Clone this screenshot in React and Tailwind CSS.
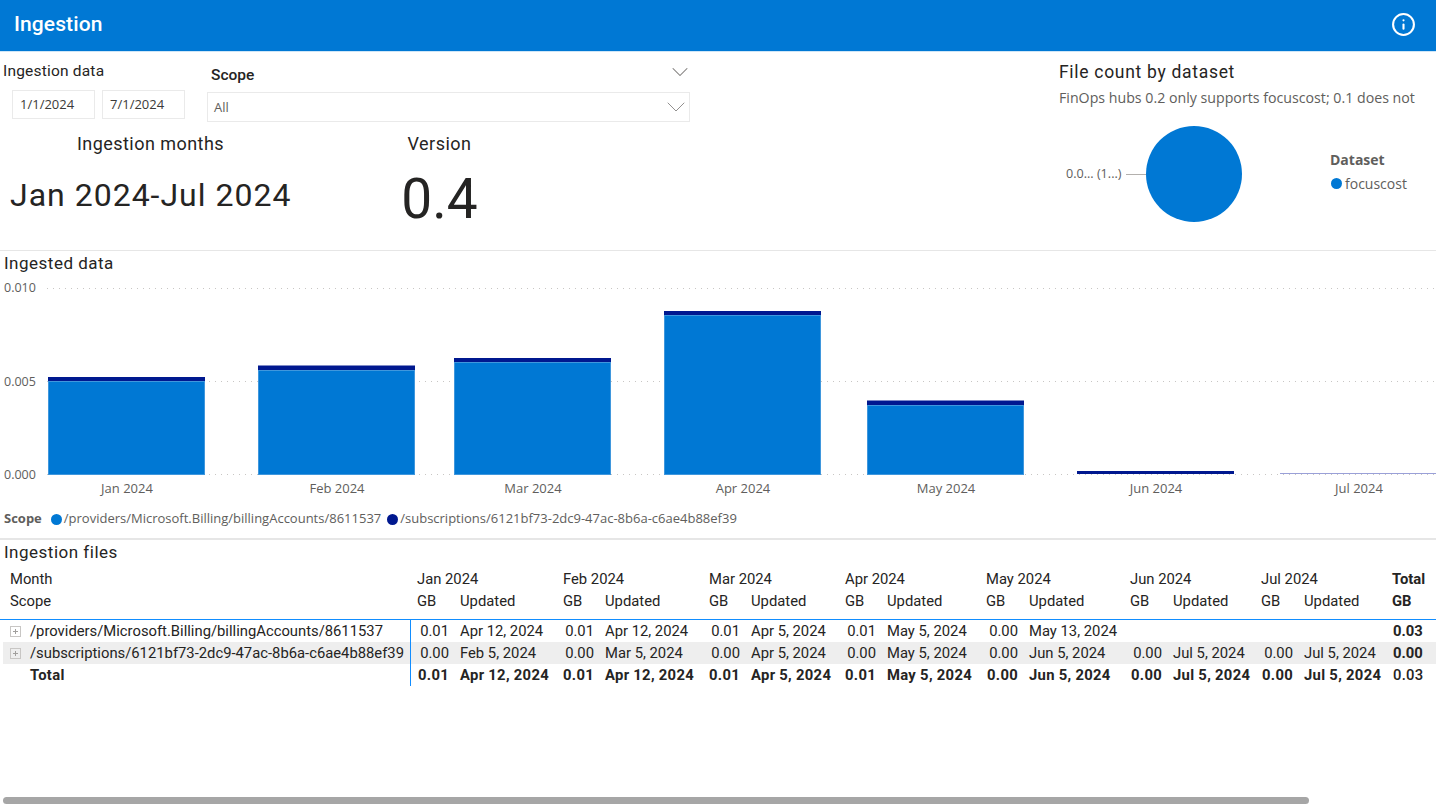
import React from 'react';
import { Info, ChevronDown } from 'lucide-react';

const din = 'font-["Roboto",sans-serif]';
const seg = 'font-["Open_Sans",sans-serif]';

const bars = [
  { label: 'Jan 2024', x: 48, blue: 381, navy: 377 },
  { label: 'Feb 2024', x: 258, blue: 370, navy: 365.5 },
  { label: 'Mar 2024', x: 454, blue: 362, navy: 358 },
  { label: 'Apr 2024', x: 664, blue: 315, navy: 311 },
  { label: 'May 2024', x: 867, blue: 405, navy: 400.5 },
  { label: 'Jun 2024', x: 1077, blue: 474, navy: 471 },
  { label: 'Jul 2024', x: 1280, blue: 474, navy: 473 },
];

const months = ['Jan 2024', 'Feb 2024', 'Mar 2024', 'Apr 2024', 'May 2024', 'Jun 2024', 'Jul 2024'];

const rows = [
  {
    name: '/providers/Microsoft.Billing/billingAccounts/8611537',
    cells: [['0.01', 'Apr 12, 2024'], ['0.01', 'Apr 12, 2024'], ['0.01', 'Apr 5, 2024'], ['0.01', 'May 5, 2024'], ['0.00', 'May 13, 2024'], ['', ''], ['', '']],
    total: '0.03',
  },
  {
    name: '/subscriptions/6121bf73-2dc9-47ac-8b6a-c6ae4b88ef39',
    cells: [['0.00', 'Feb 5, 2024'], ['0.00', 'Mar 5, 2024'], ['0.00', 'Apr 5, 2024'], ['0.00', 'May 5, 2024'], ['0.00', 'Jun 5, 2024'], ['0.00', 'Jul 5, 2024'], ['0.00', 'Jul 5, 2024']],
    total: '0.00',
  },
];

const totals = [['0.01', 'Apr 12, 2024'], ['0.01', 'Apr 12, 2024'], ['0.01', 'Apr 5, 2024'], ['0.01', 'May 5, 2024'], ['0.00', 'Jun 5, 2024'], ['0.00', 'Jul 5, 2024'], ['0.00', 'Jul 5, 2024']];

const tableCols = 'grid grid-cols-[408px_44px_102px_43px_103px_43px_93px_43px_98px_44px_100px_44px_87px_44px_87px_50px]';

const ExpandIcon = () => (
  <svg width="11" height="11" viewBox="0 0 11 11" className="shrink-0">
    <rect x="0.5" y="0.5" width="10" height="10" fill="none" stroke="#c8c6c4" />
    <path d="M3 5.5h5M5.5 3v5" stroke="#a19f9d" />
  </svg>
);

const DateBox = ({ value }) => (
  <div className={`w-[83px] h-[29px] border border-[#eaeaea] pl-[7px] flex items-center text-[13px] text-[#3b3a39] ${seg}`}>
    {value}
  </div>
);

const IngestedChart = () => (
  <svg width="1436" height="228" viewBox="0 276 1436 228" className="block">
    {[288, 381, 474].map((y) => (
      <line key={y} x1="47" x2="1436" y1={y + 0.5} y2={y + 0.5} stroke="#c8c6c4" strokeDasharray="1 5" />
    ))}
    {[['0.010', 292], ['0.005', 386], ['0.000', 479]].map(([t, y]) => (
      <text key={t} x="4" y={y} fontSize="12.5" fill="#605e5c" fontFamily="Open Sans">{t}</text>
    ))}
    {bars.map((b) => (
      <g key={b.label}>
        {b.blue < 474 && (
          <rect x={b.x + 0.5} y={b.blue + 0.5} width="156" height={474 - b.blue} fill="#0078d4" stroke="#3f97dd" />
        )}
        <rect x={b.x} y={b.navy} width="157" height={b.blue - b.navy} fill={b.label === 'Jul 2024' ? '#9aa0d8' : '#00188f'} />
        <text x={b.x + 79} y="493" textAnchor="middle" fontSize="13" fill="#605e5c" fontFamily="Open Sans">{b.label}</text>
      </g>
    ))}
  </svg>
);

const App = () => {
  return (
    <div className={`relative w-[1436px] h-[806px] overflow-hidden bg-white text-[#252423] ${din}`}>
      {/* Title bar */}
      <div className="h-[52px] bg-[#0078d4] flex items-center justify-between pl-[14px] pr-[20px] border-b border-[#cfe6f7]">
        <h1 className="text-[21px] font-medium text-white tracking-[0.1px] -mt-[2px]">Ingestion</h1>
        <Info size={25} color="#fff" strokeWidth={2} className="-mt-[3px]" />
      </div>

      {/* Slicers, cards and pie */}
      <div className="h-[198px] flex">
        <div className="w-[700px]">
          <div className="flex h-[70px]">
            <div className="w-[207px] pl-[3px] pt-[10px]">
              <div className="text-[15.5px] leading-[18px] tracking-[0.2px]">Ingestion data</div>
              <div className="flex gap-[7px] ml-[9px] mt-[10px]">
                <DateBox value="1/1/2024" />
                <DateBox value="7/1/2024" />
              </div>
            </div>
            <div className="w-[483px] pt-[13px]">
              <div className="flex items-center justify-between pl-[4px] pr-[2px] h-[20px]">
                <span className="text-[15.5px] mt-[1px] font-medium">Scope</span>
                <ChevronDown size={28} color="#7a7876" strokeWidth={0.9} className="-my-[4px] -mr-[6px] -mt-[10px]" />
              </div>
              <div className="mt-[7px] h-[30px] border border-[#eaeaea] flex items-center justify-between pl-[6px] pr-[4px]">
                <span className={`text-[13px] text-[#605e5c] mt-[2px] ${seg}`}>All</span>
                <ChevronDown size={32} color="#8a8886" strokeWidth={0.7} className="-my-[2px] -mr-[7px]" />
              </div>
            </div>
          </div>
          <div className="flex pt-[10px]">
            <div className="w-[300px] pl-[10px]">
              <div className="text-[18px] leading-[24px] text-center w-[281px] tracking-[0.45px]">Ingestion months</div>
              <div className="text-[32px] leading-[40px] mt-[19px] tracking-[1px]">Jan 2024-Jul 2024</div>
            </div>
            <div className="w-[279px] text-center">
              <div className="text-[18px] leading-[24px] tracking-[0.5px]">Version</div>
              <div className="text-[55px] leading-[64px] mt-[11px]">0.4</div>
            </div>
          </div>
        </div>

        <div className="flex-1 pl-[359px] pt-[9px]">
          <div className="text-[17.5px] leading-[22px] tracking-[0.7px]">File count by dataset</div>
          <div className={`text-[14.2px] leading-[20px] mt-[5px] text-[#605e5c] whitespace-nowrap ${seg}`}>
            FinOps hubs 0.2 only supports focuscost; 0.1 does not
          </div>
          <div className="flex items-center mt-[18px]">
            <span className={`ml-[7px] w-[60px] text-[12.6px] text-[#605e5c] whitespace-nowrap ${seg}`}>0.0... (1...)</span>
            <div className="w-[20px] h-px bg-[#b3b0ad]" />
            <div className="w-[96px] h-[96px] rounded-full bg-[#0078d4]" />
            <div className="ml-[88px] -mt-[6px]">
              <div className={`text-[14px] font-bold text-[#605e5c] ${seg}`}>Dataset</div>
              <div className="flex items-center gap-[3px] mt-[3px]">
                <span className="ml-px w-[11px] h-[11px] rounded-full bg-[#0078d4]" />
                <span className={`text-[14px] text-[#605e5c] ${seg}`}>focuscost</span>
              </div>
            </div>
          </div>
        </div>
      </div>

      {/* Ingested data chart */}
      <div className="h-[290px] border-t border-[#e6e6e6] border-b-2">
        <div className="pl-[4px] text-[17px] leading-[24px] h-[25px] tracking-[0.5px]">Ingested data</div>
        <IngestedChart />
        <div className={`flex items-center pl-[4px] h-[30px] text-[13px] text-[#605e5c] ${seg}`}>
          <span className="font-bold">Scope</span>
          <span className="w-[11px] h-[11px] rounded-full bg-[#0078d4] ml-[9px] mr-[2px]" />
          <span>/providers/Microsoft.Billing/billingAccounts/8611537</span>
          <span className="w-[11px] h-[11px] rounded-full bg-[#00188f] ml-[6px] mr-[2px]" />
          <span>/subscriptions/6121bf73-2dc9-47ac-8b6a-c6ae4b88ef39</span>
        </div>
      </div>

      {/* Ingestion files matrix */}
      <div className="pl-[3px]">
        <div className="pl-[1px] h-[28px] text-[17px] leading-[24px] tracking-[0.5px]">Ingestion files</div>
        <div className="text-[14.8px] leading-[22px]">
          <div className={`${tableCols} ml-[-3px] pl-[3px]`}>
            <div className="pl-[7px]">Month</div>
            {months.map((m) => (
              <div key={m} className="col-span-2 pl-[6px]">{m}</div>
            ))}
            <div className="pl-[6px] font-bold">Total</div>
          </div>
          <div className={`${tableCols} ml-[-3px] pl-[3px] h-[30px] border-b border-[#118dff]`}>
            <div className="pl-[7px]">Scope</div>
            {months.map((m) => (
              <React.Fragment key={m}>
                <div className="pl-[6px]">GB</div>
                <div className="pl-[5px]">Updated</div>
              </React.Fragment>
            ))}
            <div className="pl-[6px] font-bold">GB</div>
          </div>
          {rows.map((row, i) => (
            <div key={row.name} className={`${tableCols} ml-[-3px] pl-[3px] ${i === 1 ? 'bg-[linear-gradient(#eee,#eee)] bg-no-repeat bg-[position:3px_0]' : ''}`}>
              <div className="flex items-center gap-[9px] pl-[7px] border-r border-[#118dff] whitespace-nowrap">
                <ExpandIcon />
                <span>{row.name}</span>
              </div>
              {row.cells.map(([gb, upd], j) => (
                <React.Fragment key={j}>
                  <div className="text-right pr-[6px]">{gb}</div>
                  <div className="pl-[5px] whitespace-nowrap">{upd}</div>
                </React.Fragment>
              ))}
              <div className="pl-[7px] font-bold">{row.total}</div>
            </div>
          ))}
          <div className={`${tableCols} ml-[-3px] pl-[3px] font-bold tracking-[0.3px]`}>
            <div className="pl-[27px] border-r border-[#118dff]">Total</div>
            {totals.map(([gb, upd], j) => (
              <React.Fragment key={j}>
                <div className="text-right pr-[6px]">{gb}</div>
                <div className="pl-[5px] whitespace-nowrap">{upd}</div>
              </React.Fragment>
            ))}
            <div className="pl-[7px] font-medium">0.03</div>
          </div>
        </div>
      </div>

      {/* Horizontal scrollbar overlays the canvas */}
      <div className="absolute left-[3px] top-[797px] w-[1306px] h-[7px] rounded-full bg-[#a6a6a6]" />
    </div>
  );
};

export default App;
